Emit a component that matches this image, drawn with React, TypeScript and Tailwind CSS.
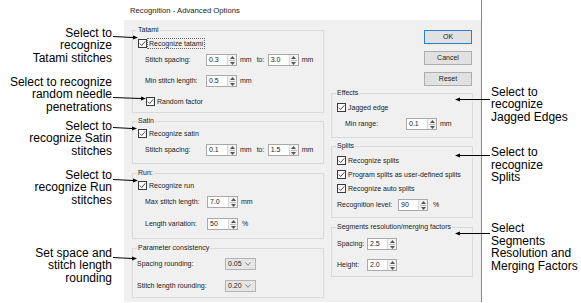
import React from 'react';

/* ---------- small dialog controls ---------- */
function Check({ label, focus }: { label: string; focus?: boolean }) {
  return (
    <div className="flex items-center h-[12px]">
      <span className="w-[9px] h-[9px] shrink-0 border border-[#3a3a3a] bg-white flex items-center justify-center">
        <svg width="7" height="7" viewBox="0 0 7 7">
          <path d="M0.8 3.6 L2.7 5.5 L6.3 1.3" fill="none" stroke="#3a3a3a" strokeWidth="0.9" />
        </svg>
      </span>
      <span
        className={`ml-[0px] px-[1px] leading-[9px] border ${
          focus ? 'border-dotted border-[#666]' : 'border-transparent'
        }`}
      >
        {label}
      </span>
    </div>
  );
}

function Spin({ value, w }: { value: string; w: string }) {
  return (
    <div className={`flex h-[12px] border border-[#a9a9a9] bg-white shrink-0 ${w}`}>
      <span className="flex-1 pl-[2px] leading-[10px]">{value}</span>
      <span className="w-[9px] flex flex-col items-center justify-center gap-[1px] bg-[#f4f4f4] border-l border-[#d6d6d6]">
        <svg width="5" height="3" viewBox="0 0 5 3">
          <path d="M0 3 L2.5 0 L5 3 Z" fill="#555" />
        </svg>
        <span className="w-[6px] h-px bg-[#bbb]" />
        <svg width="5" height="3" viewBox="0 0 5 3">
          <path d="M0 0 L2.5 3 L5 0 Z" fill="#555" />
        </svg>
      </span>
    </div>
  );
}

function Drop({ value }: { value: string }) {
  return (
    <div className="flex items-center h-[12px] w-[31px] border border-[#b4b4b4] bg-[#e6e6e6] pl-[2px]">
      <span className="flex-1 leading-[10px]">{value}</span>
      <svg width="6" height="4" viewBox="0 0 6 4" className="mr-[4px]">
        <path d="M0.5 0.5 L3 3.3 L5.5 0.5" fill="none" stroke="#666" strokeWidth="0.8" />
      </svg>
    </div>
  );
}

function Group({ title, className, children }: { title: string; className: string; children: React.ReactNode }) {
  return (
    <div className={`relative border border-[#dadada] flex flex-col ${className}`}>
      <span className="absolute left-[4px] top-[-6px] bg-[#f0f0f0] px-[1px] leading-[10px]">{title}</span>
      {children}
    </div>
  );
}

function Btn({ label, primary }: { label: string; primary?: boolean }) {
  return (
    <div
      className={`w-[48px] h-[14px] flex items-center justify-center bg-[#e1e1e1] border ${
        primary ? 'border-[#2f7fd1]' : 'border-[#adadad]'
      }`}
    >
      {label}
    </div>
  );
}

/* ---------- arrows drawn over everything ---------- */
const arrows: { x1: number; y1: number; x2: number; y2: number }[] = [
  { x1: 113, y1: 36, x2: 138, y2: 37 },
  { x1: 113, y1: 97, x2: 146, y2: 98 },
  { x1: 113, y1: 127, x2: 137, y2: 128 },
  { x1: 113, y1: 179, x2: 138, y2: 180 },
  { x1: 113, y1: 257, x2: 137, y2: 258 },
  { x1: 490, y1: 99, x2: 455, y2: 99 },
  { x1: 490, y1: 155, x2: 455, y2: 155 },
  { x1: 490, y1: 233, x2: 455, y2: 233 },
];

function Arrows() {
  return (
    <svg className="absolute inset-0 pointer-events-none" width="581" height="303">
      {arrows.map((a, i) => {
        const dir = a.x2 > a.x1 ? 1 : -1;
        const bx = a.x2 - dir * 5;
        return (
          <g key={i}>
            <line x1={a.x1} y1={a.y1 + 0.5} x2={bx} y2={a.y2 + 0.5} stroke="#000" strokeWidth="1" />
            <path d={`M${a.x2} ${a.y2 + 0.5} L${bx} ${a.y2 - 1.5} L${bx} ${a.y2 + 2.5} Z`} fill="#000" />
          </g>
        );
      })}
    </svg>
  );
}

export default function App() {
  return (
    <div className="relative w-[581px] h-[303px] bg-white flex overflow-hidden font-['Liberation_Sans',Arial,sans-serif]">
      {/* -------- left notes -------- */}
      <div className="w-[124px] shrink-0 flex flex-col items-end pr-[12px] text-right text-[12px] leading-[12.5px] text-black">
        <p className="mt-[26.75px]">Select to<br />recognize<br />Tatami stitches</p>
        <p className="mt-[11.5px]">Select to recognize<br />random needle<br />penetrations</p>
        <p className="mt-[6.5px]">Select to<br />recognize Satin<br />stitches</p>
        <p className="mt-[11.5px]">Select to<br />recognize Run<br />stitches</p>
        <p className="mt-[40.5px]">Set space and<br />stitch length<br />rounding</p>
      </div>

      {/* -------- dialog -------- */}
      <div className="w-[358px] h-[302px] shrink-0 flex flex-col border-r border-[#8a8a8a] text-[7px] text-[#222]">
        <div className="h-[20px] bg-white pl-[6px] pt-[6px] text-[7.7px] leading-[10px]">
          Recognition - Advanced Options
        </div>
        <div className="flex-1 bg-[#f0f0f0] flex gap-[7px] pt-[10px] pl-[8px] pr-[8px]">
          {/* left column */}
          <div className="w-[192px] flex flex-col">
            <Group title="Tatami" className="h-[83px]">
              <div className="mt-[6px] pl-[5px]">
                <Check label="Recognize tatami" focus />
              </div>
              <div className="mt-[5px] pl-[12px] flex items-center h-[12px]">
                <span className="w-[61px]">Stitch spacing:</span>
                <Spin value="0.3" w="w-[31px]" />
                <span className="ml-[3px]">mm</span>
                <span className="ml-[5px] w-[11px]">to:</span>
                <Spin value="3.0" w="w-[31px]" />
                <span className="ml-[3px]">mm</span>
              </div>
              <div className="mt-[9px] pl-[12px] flex items-center h-[12px]">
                <span className="w-[61px]">Min stitch length:</span>
                <Spin value="0.5" w="w-[31px]" />
                <span className="ml-[3px]">mm</span>
              </div>
              <div className="mt-[8px] pl-[13px]">
                <Check label="Random factor" />
              </div>
            </Group>

            <Group title="Satin" className="h-[43px] mt-[8px]">
              <div className="mt-[5px] pl-[5px]">
                <Check label="Recognize satin" />
              </div>
              <div className="mt-[5px] pl-[12px] flex items-center h-[12px]">
                <span className="w-[61px]">Stitch spacing:</span>
                <Spin value="0.1" w="w-[31px]" />
                <span className="ml-[3px]">mm</span>
                <span className="ml-[5px] w-[11px]">to:</span>
                <Spin value="1.5" w="w-[31px]" />
                <span className="ml-[3px]">mm</span>
              </div>
            </Group>

            <Group title="Run:" className="h-[66px] mt-[9px]">
              <div className="mt-[5px] pl-[5px]">
                <Check label="Recognize run" />
              </div>
              <div className="mt-[5px] pl-[12px] flex items-center h-[12px]">
                <span className="w-[62px]">Max stitch length:</span>
                <Spin value="7.0" w="w-[31px]" />
                <span className="ml-[3px]">mm</span>
              </div>
              <div className="mt-[10px] pl-[12px] flex items-center h-[12px]">
                <span className="w-[62px]">Length variation:</span>
                <Spin value="50" w="w-[31px]" />
                <span className="ml-[4px]">%</span>
              </div>
            </Group>

            <Group title="Parameter consistency" className="h-[50px] mt-[9px]">
              <div className="mt-[9px] pl-[4px] flex items-center h-[12px]">
                <span className="w-[88px]">Spacing rounding:</span>
                <Drop value="0.05" />
              </div>
              <div className="mt-[10px] pl-[4px] flex items-center h-[12px]">
                <span className="w-[88px]">Stitch length rounding:</span>
                <Drop value="0.20" />
              </div>
            </Group>
          </div>

          {/* right column */}
          <div className="w-[142px] flex flex-col">
            <div className="flex flex-col items-end pr-[1px] gap-[7px]">
              <Btn label="OK" primary />
              <Btn label="Cancel" />
              <Btn label="Reset" />
            </div>

            <Group title="Effects" className="h-[45px] mt-[7px]">
              <div className="mt-[7px] pl-[5px]">
                <Check label="Jagged edge" />
              </div>
              <div className="mt-[5px] pl-[13px] flex items-center h-[12px]">
                <span className="w-[61px]">Min range:</span>
                <Spin value="0.1" w="w-[31px]" />
                <span className="ml-[3px]">mm</span>
              </div>
            </Group>

            <Group title="Splits" className="h-[72px] mt-[8px]">
              <div className="mt-[7px] pl-[5px]">
                <Check label="Recognize splits" />
              </div>
              <div className="mt-[2px] pl-[5px]">
                <Check label="Program splits as user-defined splits" />
              </div>
              <div className="mt-[2px] pl-[5px]">
                <Check label="Recognize auto splits" />
              </div>
              <div className="mt-[5px] pl-[5px] flex items-center h-[12px]">
                <span className="w-[61px]">Recognition level:</span>
                <Spin value="90" w="w-[30px]" />
                <span className="ml-[5px]">%</span>
              </div>
            </Group>

            <Group title="Segments resolution/merging factors" className="h-[50px] mt-[9px]">
              <div className="mt-[10px] pl-[5px] flex items-center h-[12px]">
                <span className="w-[30px]">Spacing:</span>
                <Spin value="2.5" w="w-[30px]" />
              </div>
              <div className="mt-[9px] pl-[5px] flex items-center h-[12px]">
                <span className="w-[30px]">Height:</span>
                <Spin value="2.0" w="w-[30px]" />
              </div>
            </Group>
          </div>
        </div>
      </div>

      {/* -------- right notes -------- */}
      <div className="flex-1 flex flex-col pl-[9px] text-[12px] leading-[12.5px] text-black">
        <p className="mt-[85.5px]">Select to<br />recognize<br />Jagged Edges</p>
        <p className="mt-[23px]">Select to<br />recognize<br />Splits</p>
        <p className="mt-[38.5px]">Select<br />Segments<br />Resolution and<br />Merging Factors</p>
      </div>

      <Arrows />
    </div>
  );
}
